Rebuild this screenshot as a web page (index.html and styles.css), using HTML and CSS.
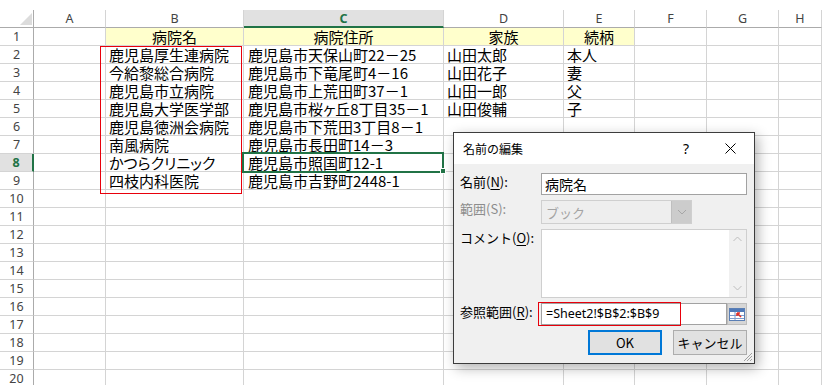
FILE: index.html
```html
<!DOCTYPE html>
<html lang="ja">
  <head>
    <meta charset="UTF-8" />
    <title>名前の編集</title>
    <link rel="stylesheet" href="styles.css">
  </head>
  <body>
    <div class="sheet">
      <div class="corner"></div><div class="ch">A</div><div class="ch">B</div><div class="ch sel">C</div><div class="ch">D</div><div class="ch">E</div><div class="ch">F</div><div class="ch">G</div><div class="ch">H</div>
      <div class="rh">1</div><div></div><div class="hd">病院名</div><div class="hd">病院住所</div><div class="hd">家族</div><div class="hd">続柄</div><div></div><div></div><div></div>
      <div class="rh">2</div><div></div><div>鹿児島厚生連病院</div><div class="addr">鹿児島市天保山町<span class="num">22－25</span></div><div>山田太郎</div><div>本人</div><div></div><div></div><div></div>
      <div class="rh">3</div><div></div><div>今給黎総合病院</div><div class="addr">鹿児島市下竜尾町<span class="num">4－16</span></div><div>山田花子</div><div>妻</div><div></div><div></div><div></div>
      <div class="rh">4</div><div></div><div>鹿児島市立病院</div><div class="addr">鹿児島市上荒田町<span class="num">37－1</span></div><div>山田一郎</div><div>父</div><div></div><div></div><div></div>
      <div class="rh">5</div><div></div><div>鹿児島大学医学部</div><div class="addr">鹿児島市桜<span class="num">ヶ</span>丘<span class="num">8</span>丁目<span class="num">35－1</span></div><div>山田俊輔</div><div>子</div><div></div><div></div><div></div>
      <div class="rh">6</div><div></div><div>鹿児島徳洲会病院</div><div class="addr">鹿児島市下荒田<span class="num">3</span>丁目<span class="num">8－1</span></div><div></div><div></div><div></div><div></div><div></div>
      <div class="rh">7</div><div></div><div>南風病院</div><div class="addr">鹿児島市長田町<span class="num">14－3</span></div><div></div><div></div><div></div><div></div><div></div>
      <div class="rh sel">8</div><div></div><div class="kana">かつらクリニック</div><div class="addr">鹿児島市照国町12-1</div><div></div><div></div><div></div><div></div><div></div>
      <div class="rh">9</div><div></div><div>四枝内科医院</div><div class="addr">鹿児島市吉野町2448-1</div><div></div><div></div><div></div><div></div><div></div>
      <div class="rh">10</div><div></div><div></div><div></div><div></div><div></div><div></div><div></div><div></div>
      <div class="rh">11</div><div></div><div></div><div></div><div></div><div></div><div></div><div></div><div></div>
      <div class="rh">12</div><div></div><div></div><div></div><div></div><div></div><div></div><div></div><div></div>
      <div class="rh">13</div><div></div><div></div><div></div><div></div><div></div><div></div><div></div><div></div>
      <div class="rh">14</div><div></div><div></div><div></div><div></div><div></div><div></div><div></div><div></div>
      <div class="rh">15</div><div></div><div></div><div></div><div></div><div></div><div></div><div></div><div></div>
      <div class="rh">16</div><div></div><div></div><div></div><div></div><div></div><div></div><div></div><div></div>
      <div class="rh">17</div><div></div><div></div><div></div><div></div><div></div><div></div><div></div><div></div>
      <div class="rh">18</div><div></div><div></div><div></div><div></div><div></div><div></div><div></div><div></div>
      <div class="rh">19</div><div></div><div></div><div></div><div></div><div></div><div></div><div></div><div></div>
      <div class="rh">20</div><div></div><div></div><div></div><div></div><div></div><div></div><div></div><div></div>
    </div>

    <!-- red frame drawn around B2:B9 -->
    <div class="range-box"></div>

    <!-- active cell C8 -->
    <div class="active-cell"><span class="fill-handle"></span></div>

    <!-- Name edit dialog -->
    <div class="dialog">
      <div class="dlg-title">
        <span>名前の編集</span>
        <span class="help">?</span>
        <svg class="close" width="11" height="11" viewBox="0 0 11 11">
          <path d="M0.5 0.5 L10.5 10.5 M10.5 0.5 L0.5 10.5" stroke="#000" stroke-width="1" fill="none"/>
        </svg>
      </div>
      <div class="dlg-body">
        <label>名前(<u>N</u>):</label>
        <div class="field">病院名</div>

        <label class="off">範囲(S):</label>
        <div class="combo">
          <span>ブック</span>
          <span class="drop">
            <svg width="10" height="6" viewBox="0 0 10 6"><path d="M1 1 L5 5 L9 1" stroke="#a6a6a6" fill="none"/></svg>
          </span>
        </div>

        <label>コメント(<u>O</u>):</label>
        <div class="memo">
          <div class="vscroll">
            <svg width="9" height="6" viewBox="0 0 9 6"><path d="M0.5 5 L4.5 1 L8.5 5" stroke="#bdbdbd" fill="none"/></svg>
            <svg width="9" height="6" viewBox="0 0 9 6"><path d="M0.5 1 L4.5 5 L8.5 1" stroke="#bdbdbd" fill="none"/></svg>
          </div>
        </div>

        <label>参照範囲(<u>R</u>):</label>
        <div class="refedit">
          <div class="field ref">=Sheet2!$B$2:$B$9</div>
          <span class="refbtn">
            <svg width="16" height="13" viewBox="0 0 16 13">
              <rect x="0.5" y="0.5" width="15" height="12" fill="#fff" stroke="#5a7fb5"/>
              <rect x="1" y="1" width="14" height="3" fill="#4f79b8"/>
              <path d="M1 7.5 H15 M1 10.5 H15 M6 4 V12" stroke="#7d9ccc"/>
              <path d="M12 9 L8 5 M8 5 V8 M8 5 H11" stroke="#e0302a" stroke-width="1.6" fill="none"/>
            </svg>
          </span>
          <div class="ref-mark"></div>
        </div>

        <div class="buttons">
          <button class="ok">OK</button>
          <button>キャンセル</button>
        </div>
      </div>
      <svg class="grip" width="10" height="10" viewBox="0 0 10 10">
        <path d="M9 1 L1 9 M9 4 L4 9 M9 7 L7 9" stroke="#a0a0a0" fill="none"/>
      </svg>
    </div>
  </body>
</html>
```

FILE: styles.css
```css
* {
  margin: 0;
  padding: 0;
  box-sizing: border-box;
}

body {
  font-family: "Noto Sans CJK JP", sans-serif;
  background-color: #fff;
  width: 822px;
  height: 385px;
  overflow: hidden;
  position: relative;
}

/* Spreadsheet grid */
.sheet {
  display: grid;
  grid-template-columns: 34px 72px 138px 200px 120px 71px 72px 72px 1fr;
  grid-auto-rows: 18px;
  margin-top: 10px;
}

.sheet > div {
  border-right: 1px solid #d4d4d4;
  border-bottom: 1px solid #d4d4d4;
  font-size: 15px;
  line-height: 17px;
  padding-left: 3px;
  white-space: nowrap;
  color: #000;
}

.sheet > .addr {
  padding-left: 4px;
}

/* proportional digits / kana like the sheet font */
.num,
.sheet > .kana {
  font-feature-settings: "palt";
}

/* column / row headings */
.sheet > .ch,
.sheet > .rh {
  font-family: "Noto Sans", sans-serif;
  font-size: 12.5px;
  line-height: 17px;
  color: #444;
  text-align: center;
  padding-left: 0;
}

.sheet > .ch {
  border-bottom-color: #ababab;
}

.sheet > .rh {
  border-right-color: #ababab;
}

.sheet > .ch.sel {
  background-color: #e1e1e1;
  border-bottom: 2px solid #217346;
  color: #217346;
  font-weight: bold;
}

.sheet > .rh.sel {
  background-color: #e1e1e1;
  border-right: 2px solid #217346;
  color: #217346;
  font-weight: bold;
}

.sheet > .corner {
  position: relative;
  border-right-color: #ababab;
  border-bottom-color: #ababab;
}

.corner::after {
  content: "";
  position: absolute;
  right: 1px;
  bottom: 2px;
  width: 12px;
  height: 12px;
  background-color: #dcdcdc;
  clip-path: polygon(100% 0, 100% 100%, 0 100%);
}

.sheet > .hd {
  background-color: #ffffcc;
  text-align: center;
  padding-left: 0;
}

/* overlays on the grid */
.range-box {
  position: absolute;
  left: 100px;
  top: 46px;
  width: 142px;
  height: 148px;
  border: 1px solid #e8000b;
}

.active-cell {
  position: absolute;
  left: 242px;
  top: 152px;
  width: 202px;
  height: 21px;
  border: 2px solid #217346;
}

.fill-handle {
  position: absolute;
  right: -4px;
  bottom: -3px;
  width: 6px;
  height: 6px;
  background-color: #217346;
  border: 1px solid #fff;
}

/* Dialog */
.dialog {
  position: absolute;
  left: 453px;
  top: 132px;
  width: 302px;
  height: 232px;
  background-color: #f0f0f0;
  border: 1px solid #3c3c3c;
  box-shadow: 3px 4px 12px rgba(0, 0, 0, 0.3);
  color: #000;
}

.dlg-title {
  height: 31px;
  background-color: #fff;
  display: flex;
  align-items: center;
  padding-left: 9px;
  font-size: 12px;
}

.help {
  margin-left: auto;
  font-family: "Noto Sans", sans-serif;
  font-size: 14px;
}

.close {
  margin-left: 36px;
  margin-right: 18px;
}

.dlg-body {
  display: grid;
  grid-template-columns: 81px 206px;
  grid-template-rows: 22px 24px 69px 22px 25px;
  row-gap: 5px;
  padding: 9px 6px 0 6px;
}

.dlg-body label {
  font-size: 13px;
  line-height: 18px;
}

.dlg-body label u {
  text-underline-offset: 2px;
}

.dlg-body label.off {
  color: #8c8c8c;
}

.field {
  background-color: #fff;
  border: 1px solid #a2a2a2;
  font-size: 14px;
  line-height: 20px;
  padding-left: 3px;
}

.combo {
  width: 151px;
  display: flex;
  align-items: center;
  background-color: #eeeeee;
  border: 1px solid #cfcfcf;
  font-size: 13px;
  color: #a3a3a3;
  padding-left: 4px;
}

.drop {
  margin-left: auto;
  width: 20px;
  height: 100%;
  background-color: #cccccc;
  border-left: 1px solid #bfbfbf;
  display: flex;
  align-items: center;
  justify-content: center;
}

.memo {
  background-color: #fff;
  border: 1px solid #cfcfcf;
  display: flex;
  justify-content: flex-end;
}

.vscroll {
  width: 17px;
  background-color: #f0f0f0;
  display: flex;
  flex-direction: column;
  justify-content: space-between;
  align-items: center;
  padding: 6px 0;
}

.refedit {
  position: relative;
  display: flex;
}

.ref {
  flex: 1;
  font-family: "Noto Sans", "Noto Sans CJK JP", sans-serif;
  font-size: 12.5px;
  padding-left: 4px;
}

.refbtn {
  width: 20px;
  background-color: #d6d6d6;
  border: 1px solid #bdbdbd;
  display: flex;
  align-items: center;
  justify-content: center;
}

.ref-mark {
  position: absolute;
  left: -3px;
  top: -1px;
  width: 143px;
  height: 24px;
  border: 1px solid #e8000b;
}

.buttons {
  grid-column: 1 / -1;
  display: flex;
  justify-content: flex-end;
  gap: 11px;
}

.buttons button {
  width: 74px;
  height: 25px;
  background-color: #e1e1e1;
  border: 1px solid #adadad;
  font-family: "Noto Sans CJK JP", sans-serif;
  font-size: 13px;
  color: #000;
}

.buttons .ok {
  border: 2px solid #0078d7;
}

.grip {
  position: absolute;
  right: 1px;
  bottom: 1px;
}
```
